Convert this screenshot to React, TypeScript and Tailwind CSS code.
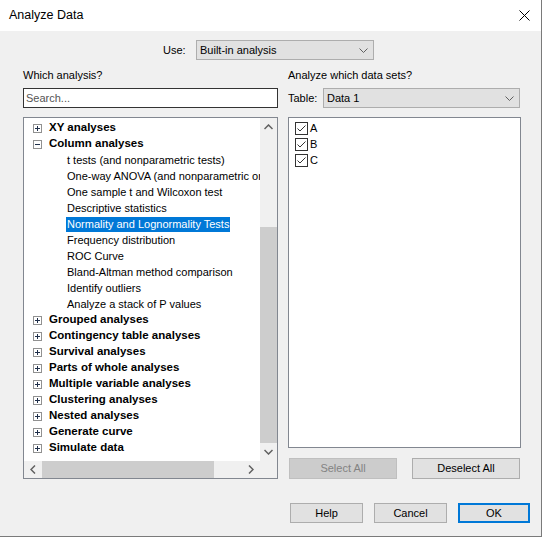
import React from "react";

const F = "font-['Liberation_Sans',Arial,sans-serif]";

function Chevron() {
  return (
    <svg width="9" height="5" viewBox="0 0 9 5" className="shrink-0">
      <path d="M0.5 0.5 L4.5 4.5 L8.5 0.5" fill="none" stroke="#606060" strokeWidth="1" />
    </svg>
  );
}

function Expander({ open }: { open?: boolean }) {
  return (
    <svg width="9" height="9" viewBox="0 0 9 9" className="shrink-0">
      <rect x="0.5" y="0.5" width="8" height="8" fill="#fff" stroke="#919191" />
      <path d="M2 4.5 H7" stroke="#1f2f4a" strokeWidth="1" />
      {!open && <path d="M4.5 2 V7" stroke="#1f2f4a" strokeWidth="1" />}
    </svg>
  );
}

function Check() {
  return (
    <svg width="13" height="13" viewBox="0 0 13 13" className="shrink-0">
      <rect x="0.5" y="0.5" width="12" height="12" fill="#fff" stroke="#333" />
      <path d="M2.5 6.5 L5 9 L10.5 3.5" fill="none" stroke="#333" strokeWidth="1" />
    </svg>
  );
}

const groupsTop = ["XY analyses"];
const children = [
  "t tests (and nonparametric tests)",
  "One-way ANOVA (and nonparametric or mixed)",
  "One sample t and Wilcoxon test",
  "Descriptive statistics",
  "Normality and Lognormality Tests",
  "Frequency distribution",
  "ROC Curve",
  "Bland-Altman method comparison",
  "Identify outliers",
  "Analyze a stack of P values",
];
const groupsBottom = [
  "Grouped analyses",
  "Contingency table analyses",
  "Survival analyses",
  "Parts of whole analyses",
  "Multiple variable analyses",
  "Clustering analyses",
  "Nested analyses",
  "Generate curve",
  "Simulate data",
];

function GroupRow({ label, open }: { label: string; open?: boolean }) {
  return (
    <div className="h-[16px] flex items-center pl-[9px] whitespace-nowrap">
      <Expander open={open} />
      <span className="ml-[7px] font-bold text-[11.5px] text-black">{label}</span>
    </div>
  );
}

export default function App() {
  return (
    <div className={`w-[542px] h-[537px] bg-[#f0f0f0] border-r border-b border-[#7a7a7a] flex flex-col text-[11px] text-black ${F}`}>
      {/* Title bar */}
      <div className="h-[31px] bg-white flex items-center justify-between pl-[9px] pr-[11px] shrink-0">
        <span className="text-[12.5px] text-black">Analyze Data</span>
        <svg width="11" height="11" viewBox="0 0 11 11">
          <path d="M0.5 0.5 L10.5 10.5 M10.5 0.5 L0.5 10.5" stroke="#000" strokeWidth="1" />
        </svg>
      </div>

      {/* Use row */}
      <div className="mt-[9px] h-[20px] flex items-center pl-[163px]">
        <span className="w-[33px]">Use:</span>
        <div className="w-[178px] h-[20px] bg-[#e1e1e1] border border-[#adadad] flex items-center justify-between pl-[3px] pr-[5px]">
          <span>Built-in analysis</span>
          <Chevron />
        </div>
      </div>

      {/* Columns */}
      <div className="mt-[7px] flex pl-[23px] gap-[10px]">
        {/* Left */}
        <div className="w-[255px] flex flex-col">
          <div className="h-[16px] leading-[16px]">Which analysis?</div>
          <div className="mt-[5px] h-[20px] bg-white border border-[#333] flex items-center pl-[2px] text-[#555]">
            Search...
          </div>
          <div className="mt-[9px] h-[362px] border border-[#828790] bg-white flex">
            <div className="flex-1 flex flex-col min-w-0">
              <div className="flex-1 overflow-hidden pt-[2px]">
                {groupsTop.map((g) => (
                  <GroupRow key={g} label={g} />
                ))}
                <GroupRow label="Column analyses" open />
                {children.map((c, i) => (
                  <div key={c} className="h-[16px] flex items-center pl-[43px] whitespace-nowrap">
                    <span
                      className={
                        i === 4
                          ? "bg-[#0078d7] text-white px-[1px] -ml-[1px] h-[15px] leading-[15px]"
                          : ""
                      }
                    >
                      {c}
                    </span>
                  </div>
                ))}
                {groupsBottom.map((g) => (
                  <GroupRow key={g} label={g} />
                ))}
              </div>
              {/* Horizontal scrollbar */}
              <div className="h-[17px] bg-[#f0f0f0] flex items-center shrink-0">
                <div className="w-[18px] flex justify-center">
                  <svg width="6" height="9" viewBox="0 0 6 9">
                    <path d="M5 0.5 L1 4.5 L5 8.5" fill="none" stroke="#606060" strokeWidth="1.5" />
                  </svg>
                </div>
                <div className="w-[172px] h-[17px] bg-[#cdcdcd]" />
                <div className="flex-1" />
                <div className="w-[18px] flex justify-center">
                  <svg width="6" height="9" viewBox="0 0 6 9">
                    <path d="M1 0.5 L5 4.5 L1 8.5" fill="none" stroke="#606060" strokeWidth="1.5" />
                  </svg>
                </div>
              </div>
            </div>
            {/* Vertical scrollbar */}
            <div className="w-[17px] bg-[#f0f0f0] flex flex-col shrink-0">
              <div className="h-[17px] flex items-center justify-center">
                <svg width="9" height="6" viewBox="0 0 9 6">
                  <path d="M0.5 5 L4.5 1 L8.5 5" fill="none" stroke="#606060" strokeWidth="1.5" />
                </svg>
              </div>
              <div className="h-[92px]" />
              <div className="h-[216px] bg-[#cdcdcd]" />
              <div className="h-[17px] flex items-center justify-center">
                <svg width="9" height="6" viewBox="0 0 9 6">
                  <path d="M0.5 1 L4.5 5 L8.5 1" fill="none" stroke="#606060" strokeWidth="1.5" />
                </svg>
              </div>
              <div className="flex-1" />
            </div>
          </div>
        </div>

        {/* Right */}
        <div className="w-[233px] flex flex-col">
          <div className="h-[16px] leading-[16px]">Analyze which data sets?</div>
          <div className="mt-[5px] h-[20px] flex items-center">
            <span className="w-[35px]">Table:</span>
            <div className="flex-1 h-[20px] bg-[#e1e1e1] border border-[#adadad] flex items-center justify-between pl-[3px] pr-[5px] mr-[1px]">
              <span>Data 1</span>
              <Chevron />
            </div>
          </div>
          <div className="mt-[9px] h-[331px] bg-white border border-[#828790] pt-[2px] pl-[6px]">
            {["A", "B", "C"].map((l) => (
              <div key={l} className="h-[16px] flex items-center">
                <Check />
                <span className="ml-[2px]">{l}</span>
              </div>
            ))}
          </div>
          <div className="mt-[10px] h-[21px] flex justify-between pl-[1px] pr-[1px]">
            <div className="w-[108px] h-[21px] bg-[#cccccc] border border-[#bfbfbf] text-[#838383] flex items-center justify-center">
              Select All
            </div>
            <div className="w-[108px] h-[21px] bg-[#e1e1e1] border border-[#adadad] flex items-center justify-center">
              Deselect All
            </div>
          </div>
        </div>
      </div>

      {/* Bottom buttons */}
      <div className="mt-[24px] flex justify-end gap-[11px] pr-[11px]">
        <div className="w-[73px] h-[20px] bg-[#e1e1e1] border border-[#adadad] flex items-center justify-center">Help</div>
        <div className="w-[73px] h-[20px] bg-[#e1e1e1] border border-[#adadad] flex items-center justify-center">Cancel</div>
        <div className="w-[72px] h-[20px] bg-[#e1e1e1] border-2 border-[#0078d7] flex items-center justify-center">OK</div>
      </div>
    </div>
  );
}
